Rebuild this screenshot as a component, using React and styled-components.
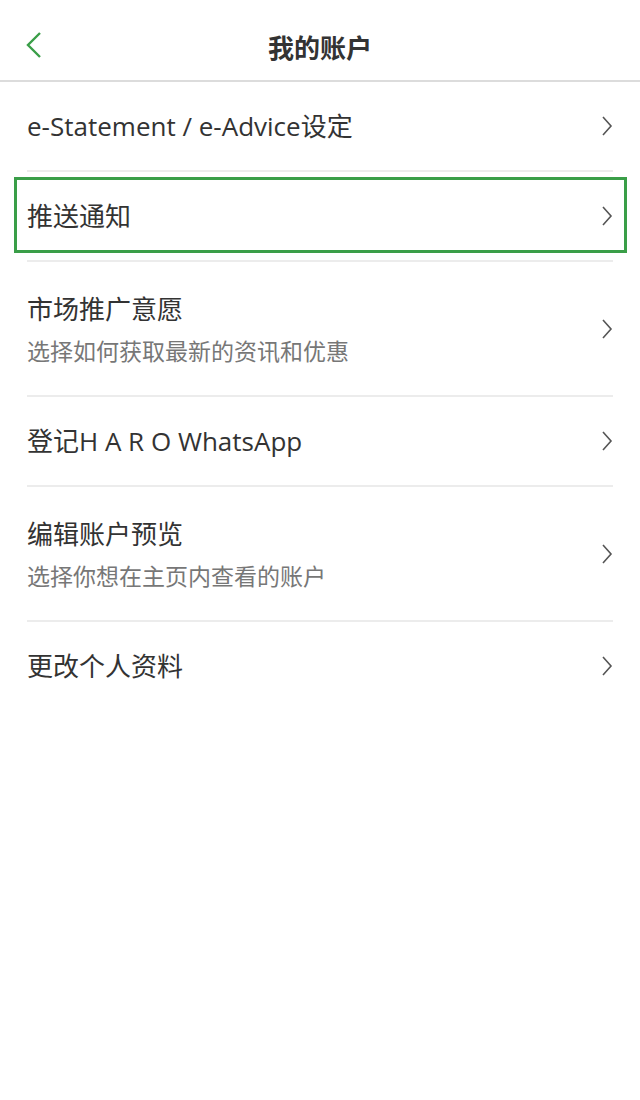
import React from 'react'
import styled, { createGlobalStyle } from 'styled-components'

const GlobalStyle = createGlobalStyle`
  body {
    margin: 0;
    background: #fff;
    font-family: 'Open Sans', 'Noto Sans CJK SC', sans-serif;
  }
`

const Page = styled.div`
  width: 640px;
  min-height: 1100px;
  background: #fff;
`

const Header = styled.header`
  height: 70px;
  padding-top: 10px;
  border-bottom: 2px solid #dcdcdc;
  display: grid;
  grid-template-columns: 80px 1fr 80px;
  align-items: center;
`

const BackButton = styled.button`
  border: 0;
  background: none;
  padding: 0 0 0 25px;
  height: 70px;
  display: flex;
  align-items: center;
  cursor: pointer;
`

const Title = styled.h1`
  margin: 0;
  text-align: center;
  font-size: 26px;
  font-weight: 700;
  color: #333;
  font-family: 'Noto Sans CJK SC', sans-serif;
  padding-top: 2px;
`

const List = styled.ul`
  list-style: none;
  margin: 0;
  padding: 0 27px;
`

const Row = styled.li`
  position: relative;
  height: ${({ tall }) => (tall ? '133px' : '88px')};
  display: flex;
  align-items: center;
  justify-content: space-between;
  border-bottom: ${({ last }) => (last ? 'none' : '2px solid #ececec')};

  ${({ highlighted }) =>
    highlighted &&
    `
    &::after {
      content: '';
      position: absolute;
      top: 5px;
      bottom: 7px;
      left: -13px;
      right: -14px;
      border: 3px solid #3a9e48;
    }
  `}
`

const Texts = styled.div`
  display: flex;
  flex-direction: column;
  gap: 8px;
`

const Label = styled.span`
  font-size: 26px;
  line-height: 36px;
  color: #333;
`

const Sub = styled.span`
  font-size: 23px;
  line-height: 32px;
  color: #777;
`

const Chevron = () => (
  <svg width="12" height="22" viewBox="0 0 12 22">
    <path d="M2 2 L10 11 L2 20" fill="none" stroke="#555" strokeWidth="1.6" />
  </svg>
)

const BackIcon = () => (
  <svg width="18" height="28" viewBox="0 0 18 28">
    <path d="M15 2 L3 14 L15 26" fill="none" stroke="#3a9e48" strokeWidth="2.4" />
  </svg>
)

const items = [
  { label: 'e-Statement / e-Advice设定' },
  { label: '推送通知', highlighted: true },
  { label: '市场推广意愿', sub: '选择如何获取最新的资讯和优惠' },
  { label: '登记H A R O WhatsApp' },
  { label: '编辑账户预览', sub: '选择你想在主页内查看的账户' },
  { label: '更改个人资料' },
]

export default function App() {
  return (
    <Page>
      <GlobalStyle />
      <Header>
        <BackButton>
          <BackIcon />
        </BackButton>
        <Title>我的账户</Title>
        <span />
      </Header>
      <List>
        {items.map((item, i) => (
          <Row
            key={item.label}
            tall={!!item.sub}
            highlighted={item.highlighted}
            last={i === items.length - 1}
          >
            <Texts>
              <Label>{item.label}</Label>
              {item.sub && <Sub>{item.sub}</Sub>}
            </Texts>
            <Chevron />
          </Row>
        ))}
      </List>
    </Page>
  )
}
